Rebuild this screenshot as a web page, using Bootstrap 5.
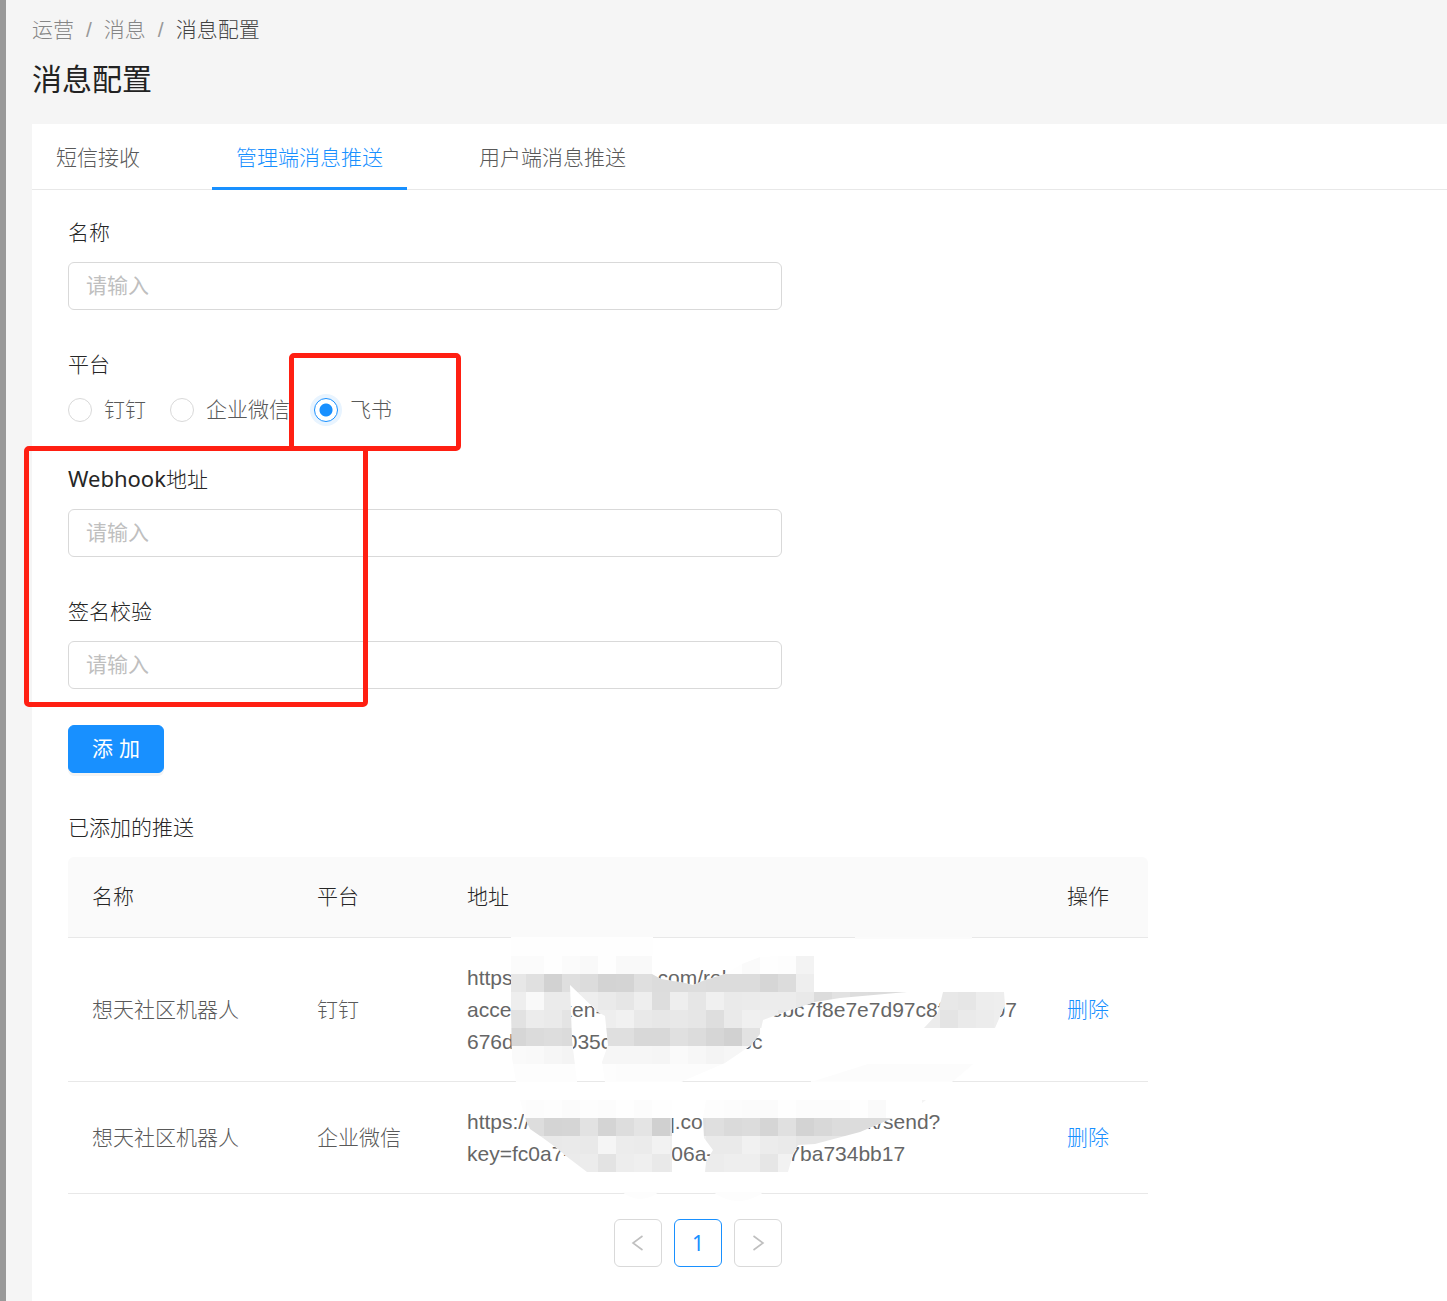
<!DOCTYPE html>
<html lang="zh-CN">
<head>
<meta charset="utf-8">
<meta name="viewport" content="width=device-width, initial-scale=1">
<title>消息配置</title>
<link rel="stylesheet" href="https://cdn.jsdelivr.net/npm/bootstrap@5.3.0/dist/css/bootstrap.min.css">
<style>
  :root { --brand: #1890ff; --ink: #262626; --soft: #595959; --line: #e8e8e8; --field: #d9d9d9; }
  body { font-family: "Liberation Sans", "Noto Sans CJK SC", sans-serif; font-size: 21px; line-height: 32px; font-weight: 300; color: var(--ink); background: #f5f5f5; }
  a { text-decoration: none; color: var(--brand); }
  .shell { border-left: 6px solid #999; padding-left: 26px; }
  .crumbs { --bs-breadcrumb-divider: "/"; --bs-breadcrumb-item-padding-x: 12px; --bs-breadcrumb-divider-color: #999; --bs-breadcrumb-margin-bottom: 0; padding-top: 14px; }
  .crumbs a { color: #858585; }
  .crumbs .active { color: #434343; }
  .page-title { font-size: 30px; line-height: 42px; font-weight: 400; margin: 13px 0 23px; color: #222; }
  .panel { background: #fff; }
  .tabs { border-bottom: 1px solid var(--line); gap: 48px; }
  .tabs .nav-link { border: 0; border-bottom: 3px solid transparent; border-radius: 0; padding: 18px 24px 13px; margin-bottom: -1px; color: var(--soft); }
  .tabs .nav-link.active { color: var(--brand); border-bottom-color: var(--brand); background: none; }
  .content { padding: 27px 36px 34px; }
  .form-area { max-width: 714px; }
  .form-label { display: block; margin-bottom: 13px; font-size: 21px; line-height: 32px; }
  .form-control { height: 48px; padding: 6px 17px; font-size: 21px; border-color: var(--field); border-radius: 6px; }
  .form-control::placeholder { color: #bfbfbf; opacity: 1; }
  .field { margin-bottom: 39px; }
  .platforms { margin-bottom: 38px; }
  .field.last-field { margin-bottom: 36px; }
  .latin { font-family: "Noto Sans", sans-serif; font-size: 22px; line-height: 22px; font-weight: 400; }
  .choice { display: flex; align-items: center; color: var(--soft); }
  .choice .form-check-input { width: 24px; height: 24px; margin: 0 12px 0 0; border-color: var(--field); }
  .choice .form-check-input:checked { background: #fff radial-gradient(circle, var(--brand) 6px, #fff 7px); border-color: var(--brand); box-shadow: 0 0 0 4px #e8f4ff; }
  .btn-add { --bs-btn-bg: #1890ff; --bs-btn-border-color: #1890ff; height: 48px; width: 96px; padding: 0; font-size: 21px; border-radius: 6px; box-shadow: 0 3px 0 #f4f4f4; }
  .push-area { max-width: 1080px; margin-top: 39px; }
  .push-title { font-size: 21px; line-height: 32px; font-weight: 300; margin: 0 0 13px; }
  .push-table { margin: 0 0 25px; table-layout: fixed; border-collapse: separate; border-spacing: 0; }
  .push-table > :not(caption) > * > * { padding: 24px 24px 23px; border-bottom: 1px solid var(--line); color: var(--soft); vertical-align: middle; background: none; }
  .push-table > thead > tr > th { padding-bottom: 24px; font-weight: 300; color: var(--ink); background: #fafafa; }
  .push-table th:first-child { border-top-left-radius: 6px; }
  .push-table th:last-child { border-top-right-radius: 6px; }
  .col-name { width: 225px; }
  .col-plat { width: 150px; }
  .col-act { width: 105px; }
  .push-table > tbody > tr > td.addr { position: relative; color: #666; white-space: nowrap; font-weight: 400; }
  .void { display: inline-block; }
  .mosaic { position: absolute; left: 0; top: 0; overflow: visible; pointer-events: none; }
  .pager { gap: 12px; margin: 0; max-width: 714px; }
  .pager .page-item .page-link { display: flex; align-items: center; justify-content: center; width: 48px; height: 48px; padding: 0; border: 1px solid var(--field); border-radius: 6px; color: #bfbfbf; background: #fff; font: 400 21px "Noto Sans", sans-serif; }
  .pager .page-item:not(:first-child) .page-link { margin-left: 0; }
  .pager .page-item.active .page-link { border-color: var(--brand); color: var(--brand); }
  .frame { position: absolute; border: 5px solid #ff1f12; border-radius: 5px; pointer-events: none; }
  .frame-choice { left: 289px; top: 353px; width: 172px; height: 98px; }
  .frame-fields { left: 24px; top: 446px; width: 344px; height: 261px; }
</style>
</head>
<body>
<div class="shell d-flex flex-column min-vh-100">
  <nav aria-label="breadcrumb">
    <ol class="breadcrumb crumbs">
      <li class="breadcrumb-item"><a href="#">运营</a></li>
      <li class="breadcrumb-item"><a href="#">消息</a></li>
      <li class="breadcrumb-item active" aria-current="page">消息配置</li>
    </ol>
  </nav>
  <h1 class="page-title">消息配置</h1>
  <main class="panel flex-grow-1">
    <ul class="nav nav-tabs tabs">
      <li class="nav-item"><a class="nav-link" href="#">短信接收</a></li>
      <li class="nav-item"><a class="nav-link active" aria-current="page" href="#">管理端消息推送</a></li>
      <li class="nav-item"><a class="nav-link" href="#">用户端消息推送</a></li>
    </ul>
    <div class="content">
      <form class="form-area">
        <div class="field">
          <label class="form-label" for="name">名称</label>
          <input class="form-control" id="name" type="text" placeholder="请输入">
        </div>
        <fieldset class="platforms">
          <legend class="form-label">平台</legend>
          <div class="d-flex gap-4">
            <label class="choice"><input class="form-check-input" type="radio" name="platform">钉钉</label>
            <label class="choice"><input class="form-check-input" type="radio" name="platform">企业微信</label>
            <label class="choice"><input class="form-check-input" type="radio" name="platform" checked>飞书</label>
          </div>
        </fieldset>
        <div class="field">
          <label class="form-label" for="hook"><span class="latin">Webhook</span>地址</label>
          <input class="form-control" id="hook" type="text" placeholder="请输入">
        </div>
        <div class="field last-field">
          <label class="form-label" for="sign">签名校验</label>
          <input class="form-control" id="sign" type="text" placeholder="请输入">
        </div>
        <button class="btn btn-primary btn-add" type="button">添 加</button>
      </form>

      <section class="push-area">
        <h2 class="push-title">已添加的推送</h2>
        <table class="table push-table">
          <colgroup><col class="col-name"><col class="col-plat"><col><col class="col-act"></colgroup>
          <thead>
            <tr><th scope="col">名称</th><th scope="col">平台</th><th scope="col">地址</th><th scope="col">操作</th></tr>
          </thead>
          <tbody>
            <tr>
              <td>想天社区机器人</td>
              <td>钉钉</td>
              <td class="addr">https<span class="void" style="width:145px"></span>com/rob<br>access_token=<span class="void" style="width:163px"></span>ebc7f8e7e7d97c8f<span class="void" style="width:50px"></span>07<br>676d<span class="void" style="width:52px"></span>035c<span class="void" style="width:129px"></span>bc
                <svg class="mosaic" width="600" height="144" viewBox="443 938 600 144" aria-hidden="true">
                  <clipPath id="clip1"><path d="M511 937H653L652 974L661 979L685 983L693 985L705 980L725 974L742 964L760 957L778 956H814V992H907L840 998L815 1002L790 1010L763 1020L760 1034L750 1046L725 1063L690 1078L681 1082H605L602 1062L608 1045L605 1016L598 1012L570 985L572 1040L577 1082H516L512 1058L511 1010Z"/><path d="M943 992H1004L1005 1005L995 1028H924L938 1013Z"/></clipPath>
                  <path d="M855 937H972V939H855Z" fill="#fbfbfb"/>
                  <path d="M811 1082L868 1064H973L952 1082Z" fill="#fcfcfc"/>
                  <g clip-path="url(#clip1)" shape-rendering="crispEdges" data-cells="1"><path d="M508 937H1010V1083H508Z" fill="#fefefe"/></g>
                </svg>
              </td>
              <td><a href="#">删除</a></td>
            </tr>
            <tr>
              <td>想天社区机器人</td>
              <td>企业微信</td>
              <td class="addr">https://<span class="void" style="width:133px"></span>q.co<span class="void" style="width:164px"></span>k/send?<br>key=fc0a7-<span class="void" style="width:101px"></span>06a-<span class="void" style="width:75px"></span>7ba734bb17
                <svg class="mosaic" width="600" height="112" viewBox="443 1082 600 112" aria-hidden="true">
                  <clipPath id="clip2"><path d="M520 1100H672V1172H587L566 1156L558 1149L543 1138L530 1129L525 1118Z"/><path d="M706 1100H886V1118H893L860 1132L815 1144L798 1145L793 1154L788 1172H705L706 1162L713 1150L704 1138L703 1118Z"/></clipPath>
                  <path d="M516 1081H577V1082H516ZM605 1081H681V1082H605ZM811 1081H952V1082H811Z" fill="#fdfdfd"/>
                  <path d="M622 1192H659Q640 1206 622 1192ZM713 1192H764Q738 1210 713 1192Z" fill="#fdfdfd"/>
                  <path d="M922 1100H926L922 1103Z" fill="#f4f4f4"/>
                  <g clip-path="url(#clip2)" shape-rendering="crispEdges" data-cells="2"><path d="M508 1082H1010V1190H508Z" fill="#fefefe"/></g>
                </svg>
              </td>
              <td><a href="#">删除</a></td>
            </tr>
          </tbody>
        </table>
        <nav aria-label="分页">
          <ul class="pagination pager justify-content-end">
            <li class="page-item"><a class="page-link" href="#" aria-label="上一页"><svg width="20" height="20" viewBox="0 0 20 20" fill="none" stroke="currentColor" stroke-width="1.6" aria-hidden="true"><path d="M14.500 3L5 10L14.500 17"/></svg></a></li>
            <li class="page-item active"><a class="page-link" href="#" aria-current="page">1</a></li>
            <li class="page-item"><a class="page-link" href="#" aria-label="下一页"><svg width="20" height="20" viewBox="0 0 20 20" fill="none" stroke="currentColor" stroke-width="1.6" aria-hidden="true"><path d="M5.500 3L15 10L5.500 17"/></svg></a></li>
          </ul>
        </nav>
      </section>
    </div>
  </main>
</div>
<div class="frame frame-choice"></div>
<div class="frame frame-fields"></div>
<script src="https://cdn.jsdelivr.net/npm/bootstrap@5.3.0/dist/js/bootstrap.bundle.min.js"></script>
<script>
  // Grey levels of the 18px redaction cells, one string per row, first column at x = 508
  const cells = {
    1: [
      [956, "fb fb fe fb f9 fe f9 f9 fe fe fe fe fe fa fe fd f3"],
      [974, "e7 e0 d2 df dc d3 d4 df dc dc dd dc dc dc d6 dc ee"],
      [992, "ee f9 eb eb ee ea e6 ee dd ee e6 f0 ea eb ec ec e9 dc e2 dd dc dc d6 ec e8 e6 ed ee"],
      [1010, "e2 ec ea e4 e4 ee f1 e9 e7 e8 e6 de ea f0 ee e8 e8 e8 e8 e8 e8 e8 e8 ec e4 ea ec ee"],
      [1028, "d6 db dd db dc df df d8 d8 e0 dc d6 d1 e2"],
      [1046, "fa f9 f6 f4 f4 f6 f6 f6 f5 fa f7 f4 f6 f8"],
      [1064, "fd fd fd fd fd fd fc fc fc fc fc fc fc fd"]
    ],
    2: [
      [1100, "fd fc fd fb fd fc fe fc fe fe fd fd fc fb fb fe fc fc fc fe fa"],
      [1118, "e0 dd d4 d5 e2 d4 dd e4 d0 dd dd df da dc d5 e0 d3 d8 dc dc dc dc"],
      [1136, "eb ea e9 ea e9 f5 ec eb f2 ef ef ea ea f1 ec ea e6 e6 e6 e6"],
      [1154, "eb eb eb eb ec e3 ed ef e9 ec ec ec ee ee e6 f2"]
    ]
  };
  for (const group of document.querySelectorAll("[data-cells]")) {
    for (const [y, row] of cells[group.dataset.cells]) {
      row.split(" ").forEach((grey, i) => {
        const r = document.createElementNS("http://www.w3.org/2000/svg", "rect");
        const box = { x: 508 + 18 * i, y, width: 18, height: 18, fill: "#" + grey.repeat(3) };
        for (const key in box) r.setAttribute(key, box[key]);
        group.append(r);
      });
    }
  }
</script>
</body>
</html>
